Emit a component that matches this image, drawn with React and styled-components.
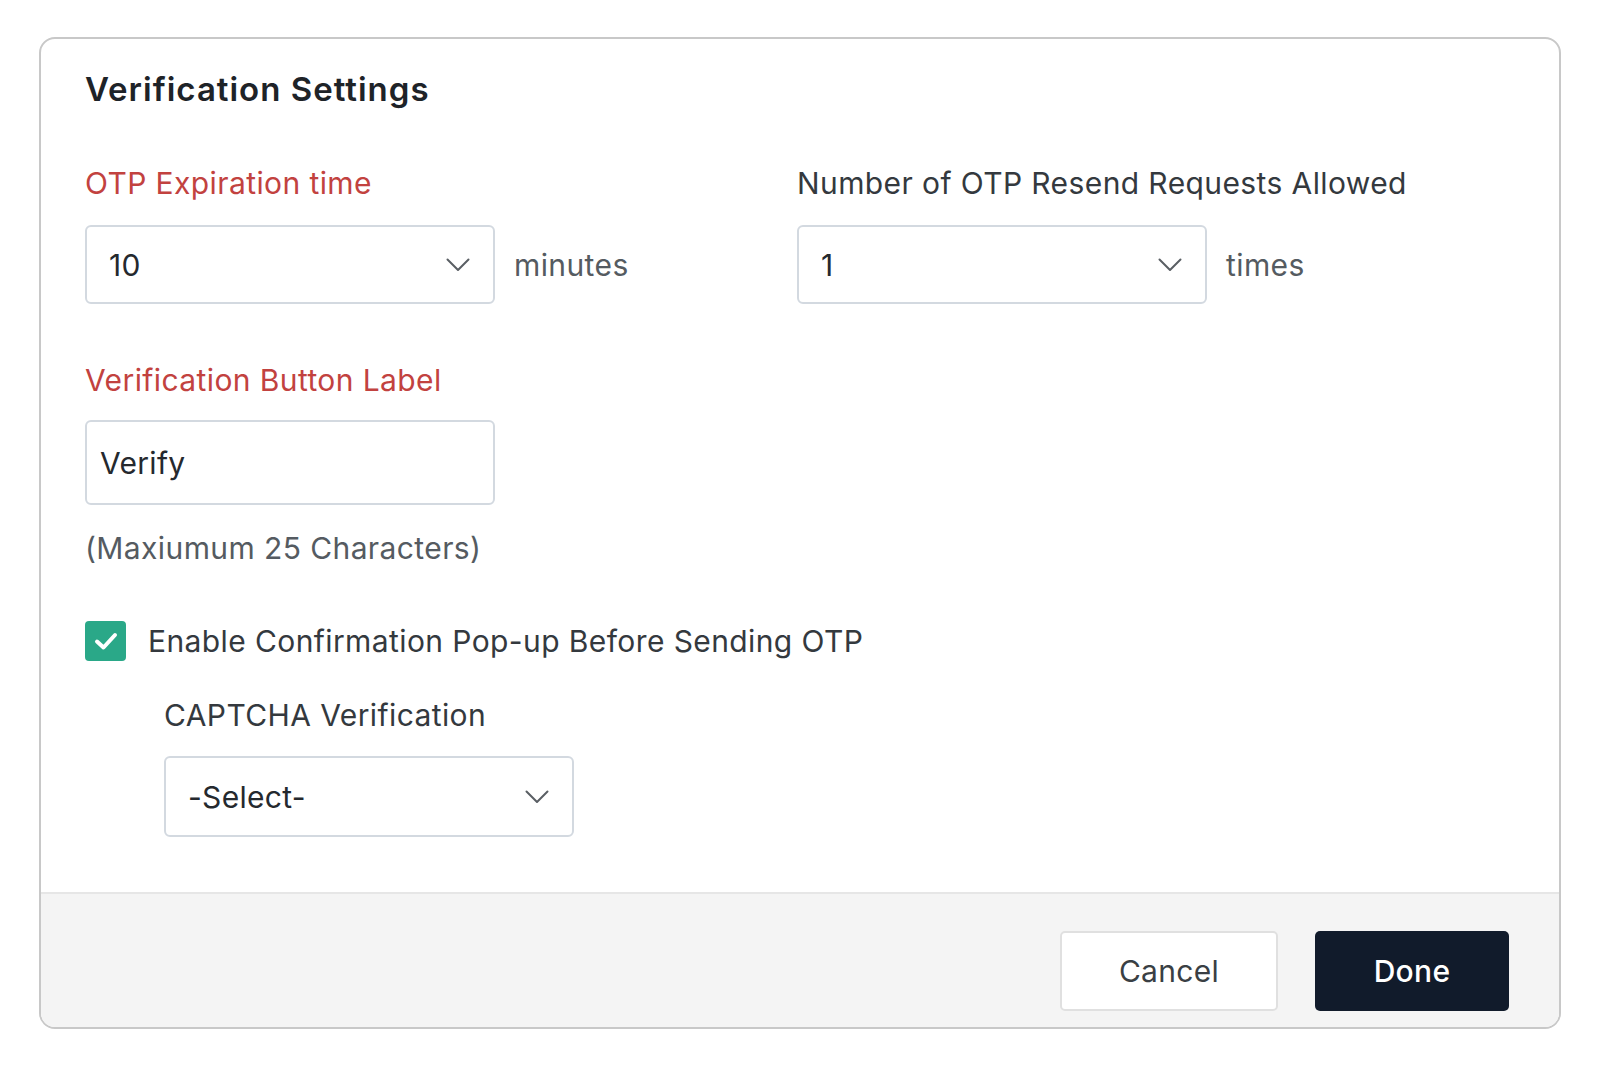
import styled, { createGlobalStyle } from "styled-components";

const GlobalStyle = createGlobalStyle`
  * { box-sizing: border-box; }
  body {
    margin: 0;
    background: #ffffff;
    font-family: Inter, "Noto Sans", sans-serif;
    color: #1f2429;
  }
`;

const Page = styled.div`
  padding: 37px 0 0 39px;
`;

const Card = styled.div`
  width: 1522px;
  height: 992px;
  border: 2px solid #c8c8c8;
  border-radius: 16px;
  overflow: hidden;
  display: flex;
  flex-direction: column;
  background: #fff;
`;

const Body = styled.div`
  flex: 1;
  padding: 30px 44px 0;
`;

const Title = styled.h2`
  margin: 0;
  font-size: 33px;
  line-height: 40px;
  font-weight: 600;
  color: #1e2328;
  letter-spacing: 1px;
`;

const Columns = styled.div`
  display: grid;
  grid-template-columns: 712px 1fr;
  margin-top: 56px;
`;

const Field = styled.div`
  display: flex;
  flex-direction: column;
`;

const Label = styled.label`
  font-size: 30px;
  line-height: 36px;
  letter-spacing: 0.4px;
  color: ${({ $required }) => ($required ? "#c2423f" : "#34393e")};
  margin-top: ${({ $top }) => $top || 0}px;
  margin-bottom: ${({ $gap }) => $gap || 24}px;
`;

const Row = styled.div`
  display: flex;
  align-items: center;
  gap: 19px;
`;

const Box = styled.div`
  width: 410px;
  height: ${({ $h }) => $h || 79}px;
  border: 2px solid #d3d9e0;
  border-radius: 6px;
  background: #fff;
  display: flex;
  align-items: center;
  justify-content: space-between;
  padding: 0 ${({ $pr }) => $pr || 23}px 0 ${({ $pl }) => $pl || 22}px;
  font-size: 30px;
  color: #25292e;
  letter-spacing: 0.3px;
`;

const Unit = styled.span`
  font-size: 30px;
  color: #555b61;
  letter-spacing: 0.4px;
`;

const Hint = styled.div`
  margin-top: 25px;
  font-size: 30px;
  line-height: 36px;
  color: #555b61;
  letter-spacing: 0.4px;
`;

const CheckRow = styled.div`
  display: flex;
  align-items: center;
  gap: 22px;
  margin-top: 55px;
`;

const CheckBox = styled.span`
  width: 41px;
  height: 40px;
  border-radius: 4px;
  background: #2aa888;
  display: flex;
  align-items: center;
  justify-content: center;
`;

const CheckText = styled.span`
  font-size: 30px;
  line-height: 36px;
  color: #34393e;
  letter-spacing: 0.4px;
`;

const Nested = styled.div`
  padding-left: 79px;
`;

const Footer = styled.div`
  height: 135px;
  background: #f4f4f4;
  border-top: 2px solid #e6e6e6;
  display: flex;
  justify-content: flex-end;
  align-items: flex-start;
  gap: 37px;
  padding: 37px 50px 0 0;
`;

const Button = styled.button`
  width: ${({ $w }) => $w}px;
  height: 80px;
  border-radius: 5px;
  font-family: Inter, "Noto Sans", sans-serif;
  font-size: 30px;
  letter-spacing: 0.3px;
  cursor: pointer;
  border: ${({ $primary }) => ($primary ? "none" : "2px solid #e0e0e0")};
  background: ${({ $primary }) => ($primary ? "#111b2b" : "#ffffff")};
  color: ${({ $primary }) => ($primary ? "#ffffff" : "#3a3f44")};
  font-weight: ${({ $primary }) => ($primary ? 500 : 400)};
`;

const Chevron = () => (
  <svg width="24" height="14" viewBox="0 0 24 14" fill="none">
    <polyline
      points="1.5,1.5 12,12 22.5,1.5"
      stroke="#5a5f64"
      strokeWidth="2"
      strokeLinecap="round"
      strokeLinejoin="round"
    />
  </svg>
);

const Check = () => (
  <svg width="24" height="20" viewBox="0 0 24 20" fill="none">
    <polyline
      points="3,10.5 9.5,16.5 21,4"
      stroke="#ffffff"
      strokeWidth="4"
      strokeLinecap="round"
      strokeLinejoin="round"
    />
  </svg>
);

const Select = ({ value, ...rest }) => (
  <Box {...rest}>
    <span>{value}</span>
    <Chevron />
  </Box>
);

const App = () => {
  return (
    <>
      <GlobalStyle />
      <Page>
        <Card>
          <Body>
            <Title>Verification Settings</Title>
            <Columns>
              <Field>
                <Label $required>OTP Expiration time</Label>
                <Row>
                  <Select value="10" $pl={22} />
                  <Unit>minutes</Unit>
                </Row>
              </Field>
              <Field>
                <Label>Number of OTP Resend Requests Allowed</Label>
                <Row>
                  <Select value="1" $pl={22} />
                  <Unit>times</Unit>
                </Row>
              </Field>
            </Columns>
            <Field>
              <Label $required $top={58} $gap={22}>
                Verification Button Label
              </Label>
              <Box $h={85} $pl={13}>
                Verify
              </Box>
            </Field>
            <Hint>(Maxiumum 25 Characters)</Hint>
            <CheckRow>
              <CheckBox>
                <Check />
              </CheckBox>
              <CheckText>Enable Confirmation Pop-up Before Sending OTP</CheckText>
            </CheckRow>
            <Nested>
              <Field>
                <Label $top={36} $gap={23}>
                  CAPTCHA Verification
                </Label>
                <Select value="-Select-" $h={81} $pl={22} />
              </Field>
            </Nested>
          </Body>
          <Footer>
            <Button $w={218}>Cancel</Button>
            <Button $w={194} $primary>
              Done
            </Button>
          </Footer>
        </Card>
      </Page>
    </>
  );
};

export default App;
